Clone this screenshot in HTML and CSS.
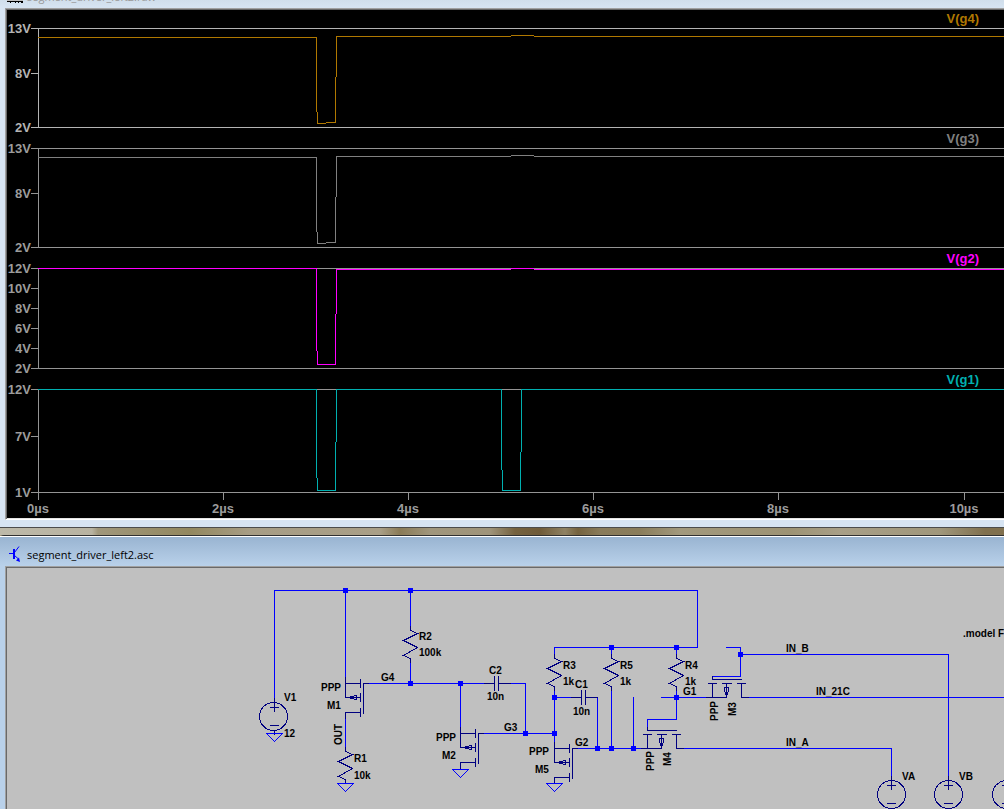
FILE: index.html
```html
<!DOCTYPE html>
<html lang="en">
<head>
<meta charset="utf-8">
<title>segment_driver_left2</title>
<link rel="stylesheet" href="styles.css">
</head>
<body>
<section class="window window-inactive">
  <header class="titlebar titlebar-inactive">
    <svg class="icon" width="16" height="16" shape-rendering="crispEdges" aria-hidden="true">
      <rect width="16" height="14" fill="#c0c0c0"/>
      <path d="M5 8h1v4h-1zM11 8h1v4h-1z" fill="#0000a0"/>
      <path d="M0 13h16v1h-16zM3 14h1v1h-1zM8 14h1v1h-1zM11 14h1v1h-1zM14 14h2v1h-2z" fill="#000"/>
    </svg>
    <h1 class="title">segment_driver_left2.raw</h1>
  </header>
  <div class="client plots">
    <section class="pane">
      <h2 class="trace-name g4">V(g4)</h2>
      <svg class="plot" role="img" aria-label="V(g4) waveform">
        <g class="lines" transform="translate(-6.5 .5)">
          <path class="grid bright" d="M31 0H4000M31 45H38M31 99H4000M38 0V99"/>
          <path class="trace-g4" d="M38 9H316V83M317 84V95H325M326 94H335V49M336 48V8H510M511 7H533M534 8H4000"/>
        </g>
        <g class="axis bright-text"><text x="24" y="5">13V</text><text x="24" y="50">8V</text><text x="24" y="104">2V</text></g>
      </svg>
    </section>
    <section class="pane">
      <h2 class="trace-name g3">V(g3)</h2>
      <svg class="plot" role="img" aria-label="V(g3) waveform">
        <g class="lines" transform="translate(-6.5 .5)">
          <path class="grid" d="M31 0H4000M31 45H38M31 99H4000M38 0V99"/>
          <path class="trace-g3" d="M38 9H316V83M317 84V95H325M326 94H335V49M336 48V8H510M511 7H533M534 8H4000"/>
        </g>
        <g class="axis"><text x="24" y="5">13V</text><text x="24" y="50">8V</text><text x="24" y="104">2V</text></g>
      </svg>
    </section>
    <section class="pane">
      <h2 class="trace-name g2">V(g2)</h2>
      <svg class="plot plot-g2" role="img" aria-label="V(g2) waveform">
        <g class="lines" transform="translate(-6.5 .5)">
          <path class="grid" d="M31 0H4000M31 20H38M31 40H38M31 60H38M31 80H38M31 100H4000M38 0V100"/>
          <path class="trace-g2" d="M38 0H316V82M317 83V96H335V46M336 45V1H510M511 0H533M534 1H4000"/>
        </g>
        <g class="axis"><text x="24" y="5">12V</text><text x="24" y="25">10V</text><text x="24" y="45">8V</text><text x="24" y="65">6V</text><text x="24" y="85">4V</text><text x="24" y="105">2V</text></g>
      </svg>
    </section>
    <section class="pane">
      <h2 class="trace-name g1">V(g1)</h2>
      <svg class="plot plot-g1" role="img" aria-label="V(g1) waveform">
        <g class="lines" transform="translate(-6.5 .5)">
          <path class="grid" d="M31 0H4000M31 47H38M31 103H4000M38 0V110M223 103V110M408 103V110M593 103V110M778 103V110M964 103V110"/>
          <path class="trace-g1" d="M38 0H316V88M317 89V101H335V53M336 52V0H501V80M502 81V101H520V63M521 62V0H4000"/>
        </g>
        <g class="axis"><text x="24" y="5">12V</text><text x="24" y="52">7V</text><text x="24" y="108">1V</text></g>
        <g class="axis time"><text x="31" y="124">0µs</text><text x="216" y="124">2µs</text><text x="401" y="124">4µs</text><text x="586" y="124">6µs</text><text x="771" y="124">8µs</text><text x="957" y="124">10µs</text></g>
      </svg>
    </section>
  </div>
</section>

<div class="desktop"></div>

<section class="window window-active">
  <header class="titlebar">
    <svg class="icon" width="16" height="20" fill="none" stroke="#00f" aria-hidden="true">
      <path d="M2 8.500h4M7.500 7.500l4.500-6M7.500 10.500l4 3.500"/>
      <path d="M7 4v10" stroke-width="2"/>
      <path d="M13 17l-4-1.500 3-3z" fill="#00f" stroke="none"/>
    </svg>
    <h1 class="title">segment_driver_left2.asc</h1>
  </header>
  <div class="client sheet">
    <svg class="schematic" role="img" aria-label="Segment driver schematic">
      <defs>
        <path id="res" d="M0 -4V0L7 3L-7 10L7 17L-7 25L0 28V32"/>
        <path id="cap" d="M-10 0H0M0 -7V7M4 -7V7M4 0H16"/>
        <path id="gnd" d="M-8 0H8L0 8Z"/>
        <path id="src" d="M0 -18V-14M-4 -9H4M0 -13V-5M-4 9H4M0 14V18"/>
        <path id="fet-side" d="M0 -6V14H15M0 0H15M15 -4V4M15 10V18M15 25V33M0 35V29H15M18 30V0H23M2 14L11 12V16Z"/>
        <path id="fet-up" d="M-6 0H14V-14M0 0V-14M29 -14V0H36M-4 -14H4M10 -14H19M25 -14H33M0 -21V-18H29M12 -10H16V-7L14 -1L12 -7Z"/>
      </defs>
      <g class="lines" transform="translate(-6.5 .5)">
        <g class="wire">
          <path d="M274 130V107M274 107V22H697V79H554V87"/>
          <path d="M274 22V130M345 22V110M410 22V58M410 92V115M368 115H484M460 115V160M510 115H525V165M483 165H554M554 121V175M554 129H571M597 129V180M577 180H641M611 79V87M611 121V180M633 129V180M676 79V87M676 121V151H647V159M661 129H705M345 150V180"/>
          <path d="M726 79H740V108H712M740 86H948V208M747 129H4000M683 180H891V208"/>
        </g>
        <g class="part">
          <use href="#src" x="274" y="148"/><circle cx="273" cy="148" r="14"/>
          <use href="#src" x="891" y="226"/><circle cx="891" cy="226" r="14"/>
          <use href="#src" x="948" y="226"/><circle cx="948" cy="226" r="14"/>
          <use href="#src" x="1006" y="226"/><circle cx="1006" cy="226" r="14"/>
          <use href="#res" x="345" y="183"/><use href="#res" x="410" y="62"/>
          <use href="#res" x="554" y="90"/><use href="#res" x="611" y="90"/><use href="#res" x="676" y="90"/>
          <use href="#cap" x="494" y="115"/><use href="#cap" x="581" y="129"/>
          <use href="#fet-side" x="345" y="115"/><use href="#fet-side" x="460" y="165"/><use href="#fet-side" x="554" y="180"/>
          <use href="#fet-up" x="647" y="180"/><use href="#fet-up" x="712" y="129"/>
          <path d="M460 194V201M554 209V215"/>
        </g>
        <g class="wire">
          <use href="#gnd" x="274" y="165"/><use href="#gnd" x="345" y="215"/><use href="#gnd" x="460" y="201"/><use href="#gnd" x="554" y="215"/>
        </g>
        <path class="node" d="M345 22h0M410 22h0M410 115h0M460 115h0M525 165h0M554 165h0M554 129h0M597 180h0M611 180h0M633 180h0M611 79h0M676 79h0M676 129h0M740 86h0"/>
      </g>
      <g class="labels" transform="translate(-7 0)">
        <text x="284" y="133">V1</text><text x="284" y="169">12</text>
        <text x="321" y="123">PPP</text><text x="327" y="141">M1</text>
        <text x="381" y="113">G4</text><text x="419" y="72">R2</text><text x="419" y="88">100k</text>
        <text x="354" y="194">R1</text><text x="354" y="211">10k</text>
        <text transform="translate(342 177) rotate(-90)">OUT</text>
        <text x="489" y="106">C2</text><text x="487" y="132">10n</text><text x="504" y="163">G3</text>
        <text x="436" y="173">PPP</text><text x="442" y="191">M2</text>
        <text x="563" y="101">R3</text><text x="563" y="117">1k</text>
        <text x="575" y="120">C1</text><text x="573" y="147">10n</text><text x="575" y="178">G2</text>
        <text x="529" y="187">PPP</text><text x="535" y="205">M5</text>
        <text x="620" y="101">R5</text><text x="620" y="117">1k</text>
        <text x="685" y="101">R4</text><text x="685" y="117">1k</text><text x="683" y="127">G1</text>
        <text transform="translate(654 203) rotate(-90)">PPP</text><text transform="translate(671 198) rotate(-90)">M4</text>
        <text transform="translate(718 153) rotate(-90)">PPP</text><text transform="translate(736 148) rotate(-90)">M3</text>
        <text x="786" y="84">IN_B</text><text x="816" y="127">IN_21C</text><text x="786" y="178">IN_A</text>
        <text x="902" y="212">VA</text><text x="959" y="212">VB</text><text x="963" y="69">.model F</text>
      </g>
    </svg>
  </div>
</section>
</body>
</html>
```
FILE: styles.css
```css
* { box-sizing: border-box; }

body {
  margin: 0;
  min-height: 100vh;
  display: flex;
  flex-direction: column;
  overflow: hidden;
  background: #a0977b;
  font-family: "Liberation Sans", Arial, sans-serif;
}

.window { display: flex; flex-direction: column; }

.window-inactive {
  background: #d7e4f2;
  padding: 0 0 7px 5px;
  border-bottom: 1px solid #4c4c4c;
}

.window-active {
  flex: 1;
  background: #b9d1ea;
  padding-left: 5px;
  border-top: 1px solid #303030;
  border-top-left-radius: 4px;
}

.titlebar {
  display: flex;
  align-items: center;
  gap: 4px;
  height: 30px;
  margin-left: -5px;
  padding: 6px 0 0 7px;
  border-top: 1px solid #fff;
  background: linear-gradient(#99b4d1, #b9d1ea);
}

.titlebar-inactive {
  height: 8px;
  align-items: flex-end;
  overflow: hidden;
  padding: 0 0 0 7px;
  border: 0;
  background: linear-gradient(#d0deeb, #d7e4f2);
}

.titlebar-inactive .icon { margin-bottom: 4px; }

.icon { flex: none; display: block; }

.title {
  margin: 0;
  font: 400 11px/22px "Open Sans", "Noto Sans", sans-serif;
  color: #000;
}

.titlebar-inactive .title { color: #999; }

.client {
  border-top: 1px solid #a0a0a0;
  border-left: 1px solid #a0a0a0;
}

.plots {
  overflow: hidden;
  background: #000;
  border-bottom: 1px solid #fff;
  box-shadow: inset 1px 1px #696969, inset 0 -1px #e3e3e3;
  padding: 1px 0 1px 1px;
}

.trace-name {
  margin: 0;
  padding-right: 25px;
  font-size: 13px;
  line-height: 18px;
  text-align: right;
}

.g4 { color: #b07800; }
.g3 { color: #808080; }
.g2 { color: #f0f; }
.g1 { color: #00b0b0; }

svg text { font-weight: 700; }

.plot { display: block; width: 100%; height: 102px; overflow: visible; }
.plot-g2 { height: 103px; }
.plot-g1 { height: 129px; }

.lines {
  fill: none;
  stroke-width: 1px;
  stroke-linecap: square;
  shape-rendering: crispEdges;
}

.grid { stroke: #949494; }
.bright { stroke: #b4b4b4; }
.trace-g4 { stroke: #b07800; }
.trace-g3 { stroke: #808080; }
.trace-g2 { stroke: #f0f; }
.trace-g1 { stroke: #00b0b0; }

.axis { fill: #9c9c9c; font-size: 13px; text-anchor: end; }
.bright-text { fill: #b4b4b4; }
.time { text-anchor: middle; }

.desktop {
  height: 7px;
  background: linear-gradient(90deg, #bdb9a9 0, #b8b3a1 92px, #a0977b 98px, #93885f 190px, #a79d85 250px, #a99f87 380px, #8a7b57 400px, #a0967c 430px, #9f947a 490px, #75623f 515px, #6f5b39 540px, #8f8263 565px, #75633f 578px, #897b5a 600px, #8a7d5b 640px, #a2997d 680px, #9d9374 790px, #a89f87 840px, #a0977b 940px, #80704e 985px);
}

.sheet {
  flex: 1;
  display: flex;
  background: #c0c0c0;
  box-shadow: inset 1px 1px #696969;
  padding: 1px 0 0 1px;
}

.schematic { flex: 1; display: block; min-height: 241px; }

.wire { stroke: #00f; }
.part { stroke: #000080; }
.node { stroke: #00f; stroke-width: 5px; }
.labels { fill: #000; font-size: 10px; }
```
